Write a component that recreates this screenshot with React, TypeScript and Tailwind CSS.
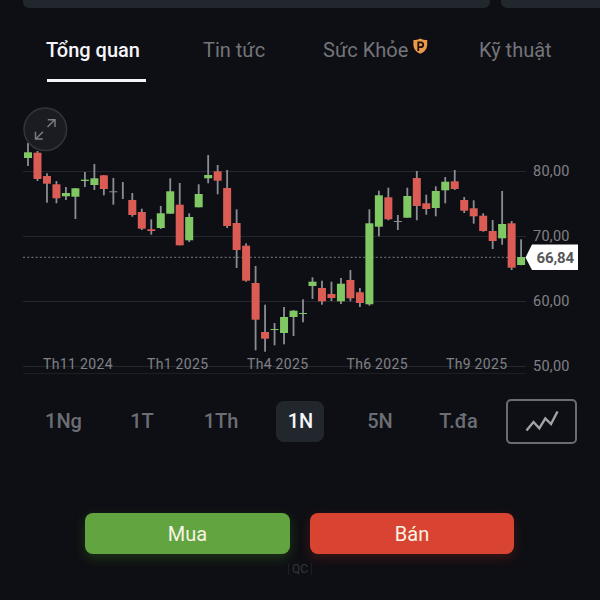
import React from 'react';
import clsx from 'clsx';

// =============================================================================
// Chart data
// =============================================================================

type Tone = 'up' | 'down' | 'flat';

// [tone, wick top, body top, body bottom, wick bottom]
type Candle = [Tone, number, number, number, number];

const CANDLES: Candle[] = [
  ['up', 143, 152.3, 158, 166],
  ['down', 151, 152.7, 179, 181],
  ['down', 173.3, 176, 183.7, 202.7],
  ['down', 181, 184.3, 198.3, 203.3],
  ['up', 187, 193, 196.3, 200],
  ['up', 188, 188.3, 196.7, 219],
  ['up', 172, 179.7, 181, 187],
  ['up', 164, 178.3, 185, 190],
  ['down', 175, 175.3, 189, 195.3],
  ['flat', 178, 191.3, 192.3, 204.7],
  ['flat', 182, 190, 190, 199],
  ['down', 193, 200, 215, 216.7],
  ['down', 208.7, 212, 228.7, 230],
  ['down', 219.3, 229.3, 231, 234.7],
  ['up', 206, 213.3, 228, 229],
  ['up', 178.3, 191.3, 213.7, 213.7],
  ['down', 183, 204.7, 245.3, 245.3],
  ['up', 213.3, 217, 240.3, 242],
  ['up', 184.3, 194, 207.3, 207.3],
  ['up', 155, 175, 178.3, 183.3],
  ['down', 165, 171.3, 180.7, 194.3],
  ['down', 170, 188, 226, 228],
  ['down', 209.3, 223, 250, 268],
  ['down', 243.3, 245.7, 280.7, 281.7],
  ['down', 266, 283, 319.7, 350.3],
  ['down', 304.7, 332, 338.7, 351.7],
  ['up', 323, 329, 330, 345.3],
  ['up', 307, 317, 333, 344.3],
  ['up', 310, 310.7, 317, 336],
  ['up', 299.3, 313, 314, 322.3],
  ['up', 277.3, 281.7, 286, 299],
  ['down', 280.7, 288, 301.3, 304.7],
  ['down', 281.7, 294, 298, 301],
  ['up', 278, 283.7, 301.3, 304],
  ['down', 270, 280, 298.3, 301.3],
  ['down', 288, 292.3, 303, 307],
  ['up', 209.3, 223.3, 304.3, 305.7],
  ['up', 190.7, 195.3, 226.7, 236.3],
  ['down', 187.7, 197.3, 219.3, 220.3],
  ['flat', 215, 221, 222, 230],
  ['up', 187.7, 196, 217.7, 217.7],
  ['down', 171, 178, 206, 220.3],
  ['down', 194.7, 203.3, 209, 214.7],
  ['up', 186.3, 191, 208, 216.3],
  ['up', 177, 181.7, 190.3, 203.3],
  ['down', 170, 181.3, 189, 190],
  ['down', 197, 200, 210.7, 213],
  ['down', 200.3, 208.3, 216.3, 223.7],
  ['down', 213.3, 215.7, 231, 231.7],
  ['down', 220, 231, 241, 249],
  ['up', 191, 224, 238.3, 244.7],
  ['down', 221, 223.3, 267.7, 270],
  ['up', 239.3, 257, 265, 265.3],
];

const FILL: Record<Tone, string> = {
  up: '#80c864',
  down: '#db5c55',
  flat: '#8b8d95',
};

const PRICE_LABELS = [
  { y: 171.5, label: '80,00' },
  { y: 236.8, label: '70,00' },
  { y: 301.8, label: '60,00' },
  { y: 366.7, label: '50,00' },
];

const DATE_LABELS = [
  { x: 43, w: 69.5, label: 'Th11 2024' },
  { x: 147, w: 61, label: 'Th1 2025' },
  { x: 247, w: 61, label: 'Th4 2025' },
  { x: 346.5, w: 61, label: 'Th6 2025' },
  { x: 446, w: 61, label: 'Th9 2025' },
];

// =============================================================================
// Tabs
// =============================================================================

function PremiumBadge() {
  return (
    <svg className="mb-2 ml-[5px] h-4 w-[15px]" viewBox="0 0 15 16">
      <path
        d="M7.3 0.4 C9.5 1.6 11.8 2 14.2 2 V6.5 C14.2 11 11.6 13.8 7.3 15.8 C3 13.8 0.4 11 0.4 6.5 V2 C2.8 2 5.1 1.6 7.3 0.4 Z"
        fill="#e99a4a"
      />
      <path d="M5.3 13 V4.3 H8.2 A2.5 2.5 0 0 1 8.2 9.2 H5.5" fill="none" stroke="#20120a" strokeWidth="1.8" />
    </svg>
  );
}

function Tabs() {
  return (
    <nav className="flex h-[49px] items-start pl-[47px] text-[20px] leading-6 text-[#74757a]">
      <div className="flex h-[44px] w-[99px] flex-col border-b-[3px] border-[#f4f5f9] font-medium whitespace-nowrap text-[#f4f5f9]">
        <span className="-ml-px">Tổng quan</span>
      </div>
      <span className="ml-[57px] w-[120px]">Tin tức</span>
      <div className="flex w-[156px] items-center">
        <span className="whitespace-nowrap">Sức Khỏe</span>
        <PremiumBadge />
      </div>
      <span className="whitespace-nowrap">Kỹ thuật</span>
    </nav>
  );
}

// =============================================================================
// Candlestick chart
// =============================================================================

function CandleChart() {
  return (
    <svg className="block h-[290px] w-[600px]" viewBox="0 96 600 290">
      {/* Grid */}
      {PRICE_LABELS.map(({ y }) => (
        <rect key={y} x="23" y={Math.floor(y)} width="503" height="1" fill="#26272d" />
      ))}
      <rect x="23" y="373" width="503" height="1" fill="#1e1f25" />
      <path d="M23 257.3 H516" stroke="#65666b" strokeWidth="1.2" strokeDasharray="2 2.2" />

      {/* Candles */}
      {CANDLES.map(([tone, high, top, bottom, low], i) => {
        const x = 28 + i * 9.483;
        return (
          <g key={i}>
            <rect x={x - 0.9} y={high} width="1.8" height={low - high} fill="#8b8d95" />
            <rect x={x - 4} y={top} width="8" height={bottom - top} fill={FILL[tone]} />
          </g>
        );
      })}

      {/* Axis labels */}
      <g fontFamily="Roboto, sans-serif" fontSize="14.5" fill="#808187">
        {PRICE_LABELS.map(({ y, label }) => (
          <text key={label} x="533" y={y + 4.3} textLength="36.5">
            {label}
          </text>
        ))}
        {DATE_LABELS.map(({ x, w, label }) => (
          <text key={label} x={x} y="368.6" fontSize="14" textLength={w}>
            {label}
          </text>
        ))}
      </g>

      {/* Current price */}
      <path d="M525.5 257.5 L532 244.5 H578 V270 H532 Z" fill="#ffffff" />
      <text x="536.5" y="263.3" fontFamily="Roboto, sans-serif" fontSize="15" fontWeight="700" fill="#55565a" textLength="37.5">
        66,84
      </text>

      {/* Expand button */}
      <circle cx="45.3" cy="129.3" r="21.3" fill="#1b1c22" stroke="#33343b" strokeWidth="1.5" />
      <path
        d="M47.5 127 L54.5 120 M47.8 119.8 H55 V127 M43 131.8 L36 138.8 M35.5 131.8 V139 H42.7"
        fill="none"
        stroke="#7d7f85"
        strokeWidth="1.4"
      />
    </svg>
  );
}

// =============================================================================
// Range selector
// =============================================================================

const RANGES = [
  { label: '1Ng', className: 'ml-[34px] w-[59px]' },
  { label: '1T', className: 'ml-[23px] w-[52px]' },
  { label: '1Th', className: 'ml-7 w-[50px]' },
  { label: '1N', className: 'ml-[30px] w-12 pl-px', active: true },
  { label: '5N', className: 'ml-[31px] w-[50px]' },
  { label: 'T.đa', className: 'ml-[25px] w-[57px]' },
];

function RangeSelector() {
  return (
    <div className="flex h-[52px] items-center text-[20px] font-medium text-[#6c6e75]">
      {RANGES.map(({ label, className, active }) => (
        <button
          key={label}
          className={clsx(
            'flex h-[41px] items-center justify-center rounded-lg',
            className,
            active && 'bg-[#22262d] text-[#f4f5f9]',
          )}
        >
          {label}
        </button>
      ))}
      <button className="ml-[19px] flex h-[45px] w-[71px] items-center justify-center rounded-[5px] border-2 border-[#6b6c71]">
        <svg className="h-6 w-9" viewBox="0 0 36 24" fill="none" stroke="#a1a2a6" strokeWidth="2.4">
          <path d="M2.5 21.5 L9.5 13 L15.3 19.3 L21.3 9.5 L27 15 L33.5 2.5" />
        </svg>
      </button>
    </div>
  );
}

// =============================================================================
// App
// =============================================================================

export default function App() {
  return (
    <div className="flex h-[600px] w-[600px] flex-col overflow-hidden bg-[#0e0f14] font-['Roboto',sans-serif]">
      {/* Bottom edge of the cards above */}
      <div className="flex h-[38px] items-start gap-[11px] pl-[23px]">
        <div className="h-2 w-[467px] rounded-b-md bg-[#22262d]" />
        <div className="h-2 flex-1 rounded-bl-md bg-[#22262d]" />
      </div>

      <Tabs />
      <div className="mt-[9px]">
        <CandleChart />
      </div>
      <div className="mt-[9px]">
        <RangeSelector />
      </div>

      {/* Order buttons */}
      <div className="mt-[66px] flex gap-5 pl-[85px] text-[20px] text-[#f8f4e6]">
        <button className="h-[41px] w-[205px] rounded-lg bg-[#62a43f] shadow-[0_4px_12px_rgba(60,130,30,0.35)]">Mua</button>
        <button className="h-[41px] w-[204px] rounded-lg bg-[#d94432] shadow-[0_4px_12px_rgba(170,40,30,0.3)]">Bán</button>
      </div>

      <div className="mt-[9px] flex justify-center">
        <span className="flex h-3 items-center border-x border-[#1d1e23] px-[3px] text-[12px] leading-3 text-[#35363c]">QC</span>
      </div>
    </div>
  );
}
